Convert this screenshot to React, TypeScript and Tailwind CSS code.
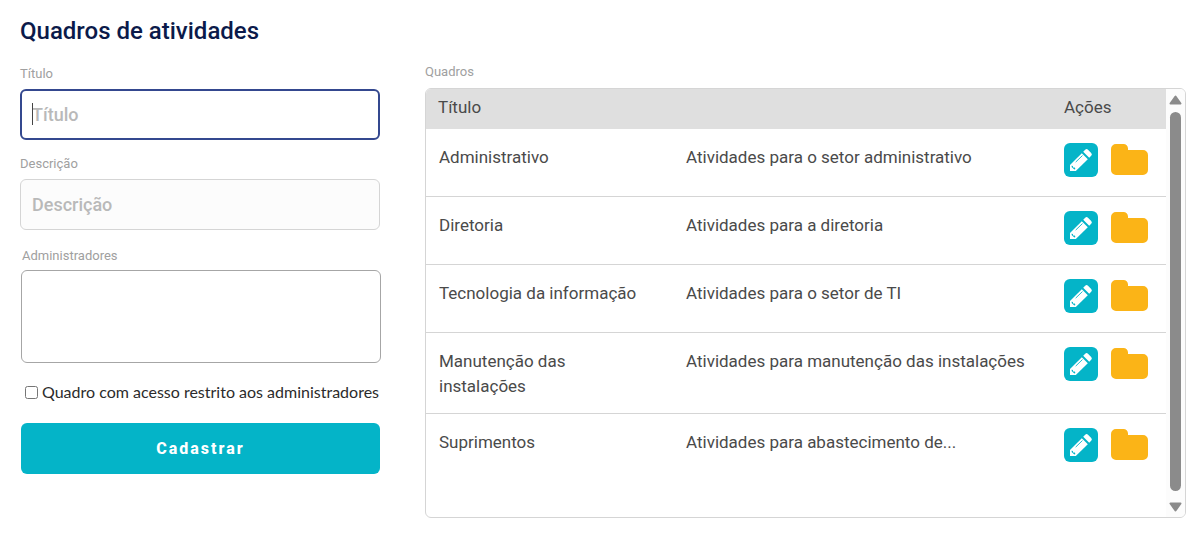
const boards = [
  { title: "Administrativo", description: "Atividades para o setor administrativo" },
  { title: "Diretoria", description: "Atividades para a diretoria" },
  { title: "Tecnologia da informação", description: "Atividades para o setor de TI" },
  { title: "Manutenção das instalações", description: "Atividades para manutenção das instalações" },
  { title: "Suprimentos", description: "Atividades para abastecimento de..." },
];

function EditIcon() {
  return (
    <svg viewBox="0 0 34 34" className="block size-[34px]" aria-hidden="true">
      <rect width="34" height="34" rx="6" fill="#04b4c8" />
      <path d="M17.8 10.2L23.8 16.2L11.8 28H6V22Z" fill="#fff" />
      <path d="M19.2 8.8L21.2 6.8Q22.6 5.4 24 6.8L27.2 10Q28.6 11.4 27.2 12.8L25.2 14.8Z" fill="#fff" />
      <path d="M12 18.8L18.2 12.8" stroke="#04b4c8" strokeWidth="0.9" strokeLinecap="round" />
      <path d="M7.8 22.4L9 23.2V24.6H10.8L11.4 26L10.4 26.6L7.6 24Z" fill="#04b4c8" />
    </svg>
  );
}

function FolderIcon() {
  return (
    <svg viewBox="0 0 37 31" className="block h-[31px] w-[37px]" aria-hidden="true">
      <path
        d="M5 0H12.5A4.5 4.5 0 0 1 17 4.5V6H32A5 5 0 0 1 37 11V26A5 5 0 0 1 32 31H5A5 5 0 0 1 0 26V5A5 5 0 0 1 5 0Z"
        fill="#fbb417"
      />
    </svg>
  );
}

function ScrollTrack() {
  return (
    <div className="flex w-[19px] shrink-0 flex-col items-center gap-1 bg-[#fcfcfc] pt-1.5 pb-[5px]" aria-hidden="true">
      <svg viewBox="0 0 13 10" className="h-2.5 w-[13px] shrink-0">
        <path d="M6.5 1.5L11.5 8.5H1.5Z" fill="#8b8b8b" stroke="#8b8b8b" strokeWidth="2" strokeLinejoin="round" />
      </svg>
      <div className="mt-[3px] mb-[7px] w-[11px] flex-1 rounded-full bg-[#8b8b8b]" />
      <svg viewBox="0 0 13 10" className="h-2.5 w-[13px] shrink-0">
        <path d="M6.5 8.5L1.5 1.5H11.5Z" fill="#8b8b8b" stroke="#8b8b8b" strokeWidth="2" strokeLinejoin="round" />
      </svg>
    </div>
  );
}

export default function App() {
  return (
    <main className="bg-white pt-4 pr-1.5 pb-4 pl-5 font-['Roboto',sans-serif]">
      <h1 className="text-2xl leading-[30px] font-medium text-[#0b1a4a]">Quadros de atividades</h1>
      <div className="mt-4 flex items-start gap-[45px]">
        <form className="flex w-[360px] shrink-0 flex-col" onSubmit={(e) => e.preventDefault()}>
          <label htmlFor="titulo" className="pt-0.5 text-[13px] leading-5 text-[#a0a0a0]">Título</label>
          <div className="relative mt-[5px]">
            <input
              id="titulo"
              placeholder="Título"
              className="block h-[51px] w-full rounded-md border-2 border-[#34488f] bg-white px-2.5 text-lg font-medium text-[#444] caret-transparent outline-none placeholder:text-[#b9b9b9]"
            />
            <span className="absolute top-3.5 left-3 h-[22px] w-px bg-[#444]" />
          </div>
          <label htmlFor="descricao" className="mt-3.5 text-[13px] leading-5 text-[#a0a0a0]">Descrição</label>
          <input
            id="descricao"
            placeholder="Descrição"
            className="mt-[5px] block h-[51px] w-full rounded-md border border-[#d5d5d5] bg-[#fcfcfc] px-[11px] text-lg font-medium text-[#444] outline-none placeholder:text-[#b9b9b9]"
          />
          <label htmlFor="administradores" className="mt-4 pl-0.5 text-[13px] leading-5 text-[#a0a0a0]">Administradores</label>
          <textarea
            id="administradores"
            className="mt-1 ml-px block h-[93px] w-full resize-none rounded-md border border-[#a6a6a6] bg-white p-2 outline-none"
          />
          <label className="mt-[17px] ml-[5px] flex items-center gap-1 font-['Lato',sans-serif] text-base leading-6 whitespace-nowrap text-[#2b2b2b]">
            <input type="checkbox" className="size-[13px]" />
            Quadro com acesso restrito aos administradores
          </label>
          <button
            type="submit"
            className="mt-[19px] ml-px h-[51px] rounded-md bg-[#04b4c8] text-base font-extrabold tracking-[2px] text-white"
          >
            Cadastrar
          </button>
        </form>
        <section className="min-w-0 flex-1">
          <h2 className="text-[13px] leading-5 text-[#a0a0a0]">Quadros</h2>
          <div className="mt-1.5 flex min-h-[430px] overflow-hidden rounded-md border border-[#d5d5d5]">
            <div className="min-w-0 flex-1">
              <table className="w-full table-fixed border-collapse text-left text-[17px] leading-[25px] text-[#4a4a4a]">
                <colgroup>
                  <col className="w-[248px]" />
                  <col />
                  <col className="w-[114px]" />
                </colgroup>
                <thead className="bg-[#dfdfdf]">
                  <tr className="h-10 align-top">
                    <th className="px-3 pt-1.5 font-normal" colSpan={2}>Título</th>
                    <th className="px-3 pt-1.5 font-normal">Ações</th>
                  </tr>
                </thead>
                <tbody>
                  {boards.map((board) => (
                    <tr key={board.title} className="border-b border-[#d5d5d5] align-top last:border-b-0">
                      <td className="pt-4 pr-6 pb-3.5 pl-[13px]">{board.title}</td>
                      <td className="pt-4 pb-3.5 pl-3">{board.description}</td>
                      <td className="pt-3.5 pb-[19px] pl-3">
                        <div className="flex gap-[13px]">
                          <button type="button" aria-label={`Editar ${board.title}`}>
                            <EditIcon />
                          </button>
                          <button type="button" className="pb-px" aria-label={`Abrir ${board.title}`}>
                            <FolderIcon />
                          </button>
                        </div>
                      </td>
                    </tr>
                  ))}
                </tbody>
              </table>
            </div>
            <ScrollTrack />
          </div>
        </section>
      </div>
    </main>
  );
}
